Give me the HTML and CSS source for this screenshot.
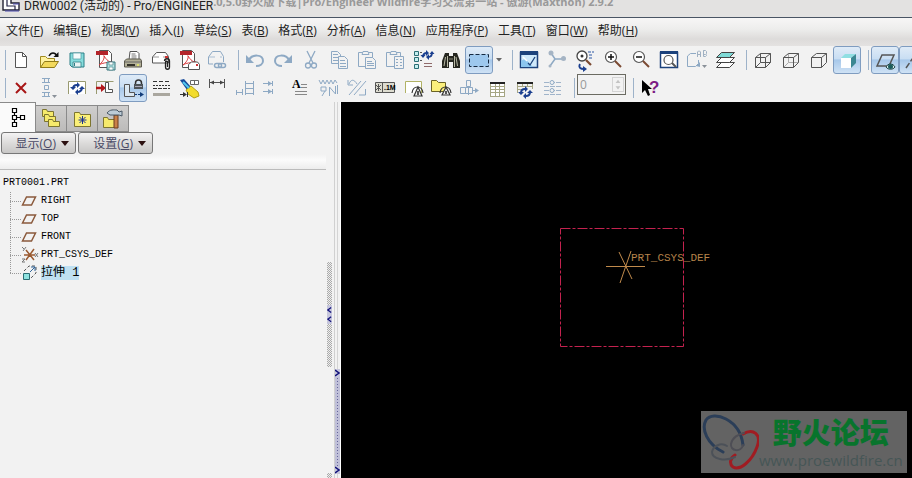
FILE: index.html
```html
<!DOCTYPE html>
<html lang="zh">
<head>
	<meta charset="UTF-8">
	<title>DRW0002 (活动的) - Pro/ENGINEER</title>
	<link rel="stylesheet" href="styles.css">
</head>
<body>

<header class="titlebar">
	<svg class="app-icon" width="18" height="12" viewBox="0 0 18 12"><path d="M1 0V10H17V3H9V0" fill="#fff" stroke="#223" stroke-width="1.4"/><path d="M5 0V6H13V10" fill="none" stroke="#224" stroke-width="1.2"/><path d="M11 4h6M3 11h14" stroke="#4a4ab0"/></svg>
	<h1>DRW0002 (活动的) - Pro/ENGINEER</h1>
	<span class="ghost">.0,5.0野火版下载|Pro/Engineer Wildfire学习交流第一站 - 傲游(Maxthon) 2.9.2</span>
</header>

<nav class="menubar">
	<a href="#">文件(<u>F</u>)</a>
	<a href="#">编辑(<u>E</u>)</a>
	<a href="#">视图(<u>V</u>)</a>
	<a href="#">插入(<u>I</u>)</a>
	<a href="#">草绘(<u>S</u>)</a>
	<a href="#">表(<u>B</u>)</a>
	<a href="#">格式(<u>R</u>)</a>
	<a href="#">分析(<u>A</u>)</a>
	<a href="#">信息(<u>N</u>)</a>
	<a href="#">应用程序(<u>P</u>)</a>
	<a href="#">工具(<u>T</u>)</a>
	<a href="#">窗口(<u>W</u>)</a>
	<a href="#">帮助(<u>H</u>)</a>
</nav>

<div class="toolbars">
	<!-- file, edit, view, display -->
	<div class="toolbar">
		<button aria-label="新建"><svg viewBox="0 0 24 24"><path d="M6.500 4.500h7l4 4v11h-11z" fill="#fff" stroke="#555"/><path d="M13.500 4.500v4h4" fill="none" stroke="#555"/></svg></button>
		<button aria-label="打开"><svg viewBox="0 0 24 24"><path d="M3.500 19.500v-11h5l2 2h7v3" fill="#fff2a0" stroke="#a08a20"/><path d="M3.500 19.500l4-6h14l-4 6z" fill="#f3d95c" stroke="#8f7a18"/><path d="M12 8c2-4 6-4 8 0" fill="none" stroke="#111" stroke-width="1.500"/><path d="M21.500 4v5h-5z" fill="#111"/></svg></button>
		<button aria-label="保存"><svg viewBox="0 0 24 24"><path d="M5 5h14v14H7l-2-2z" fill="#86dcdc" stroke="#2c7f86"/><path d="M8 5h8v6H8z" fill="#f4fbfb" stroke="#4d9aa0" stroke-width=".7"/><path d="M8 14h8v5H8z" fill="#e8f4f4" stroke="#2c7f86" stroke-width=".8"/><path d="M9.500 15v3" stroke="#2c7f86"/></svg></button>
		<button aria-label="导出 PDF"><svg viewBox="0 0 24 24"><path d="M6.500 2.500h9l3 3v14h-12z" fill="#fff" stroke="#555"/><path d="M3 3h12v4H3z" fill="#b3242a"/><path d="M6 17c3-2 6-7 5-9s3 6 7 6-8 0-12 3" fill="none" stroke="#d9383c"/><path d="M14 14h8v8h-8z" fill="#b5e4e4" stroke="#39757c"/><path d="M16 14h4v3h-4zM16 19h4v3h-4z" fill="#fff" stroke="#39757c" stroke-width=".6"/></svg></button>
		<button aria-label="打印"><svg viewBox="0 0 24 24"><path d="M8 12l1-8.500h7l2 2V12" fill="#fff" stroke="#555"/><path d="M10.500 6h4M10.500 8h5M10.500 10h5" stroke="#777"/><path d="M3.500 13l2-2h14l1 2v6h-17z" fill="#b3b098" stroke="#5a584c"/><path d="M4 14h16" stroke="#666"/><path d="M6 17h8" stroke="#33322a" stroke-width="2"/><path d="M16 17h2" stroke="#dde070" stroke-width="2"/></svg></button>
		<button aria-label="发送附件"><svg viewBox="0 0 24 24"><path d="M3.500 15V9l4-4.500h9l3 4V15z" fill="#fff" stroke="#555"/><path d="M4 9h6M14 9h2" stroke="#999"/><path d="M16 8h3v2h-3z" fill="#c33"/><path d="M15.500 13c0-3 5-3 5 0v6c0 3-4 3-4 0v-5c0-1 2-1 2 0v5" fill="none" stroke="#222" stroke-width="1.300"/></svg></button>
		<button aria-label="发送 PDF"><svg viewBox="0 0 24 24"><path d="M5.500 2.500h9l3 3v14h-12z" fill="#fff" stroke="#555"/><path d="M3 3h12v4H3z" fill="#b3242a"/><path d="M6 17c3-2 6-7 5-9s3 6 7 6-8 0-12 3" fill="none" stroke="#d9383c"/><path d="M11.500 21.500v-5l3-2.500h6l2 2.500v5z" fill="#fff" stroke="#555"/><path d="M19 16h2v2h-2z" fill="#c33"/></svg></button>
		<button disabled aria-label="发送链接"><svg viewBox="0 0 24 24"><path d="M3.500 16V9l4-5.500h8l3 5V14M3.500 16H8" fill="none" stroke="#8ea9c4"/><path d="M4 9h6M15 9h2" stroke="#a9bdd2"/><rect x="9.500" y="15.500" width="7" height="4" rx="2" fill="none" stroke="#8ea9c4" stroke-width="1.500"/><rect x="13.500" y="15.500" width="7" height="4" rx="2" fill="none" stroke="#8ea9c4" stroke-width="1.500"/></svg></button>
		<span class="sep"></span>
		<button disabled aria-label="撤消"><svg viewBox="0 0 24 24"><path d="M6 12c3-6 14-6 14 1 0 3-3 5-7 5" fill="none" stroke="#8ea9c4" stroke-width="2"/><path d="M3 7v8h8z" fill="#8ea9c4"/></svg></button>
		<button disabled aria-label="重做"><svg viewBox="0 0 24 24"><path d="M18 12c-3-6-14-6-14 1 0 3 3 5 7 5" fill="none" stroke="#8ea9c4" stroke-width="2"/><path d="M21 7v8h-8z" fill="#8ea9c4"/></svg></button>
		<button disabled aria-label="剪切"><svg viewBox="0 0 24 24"><path d="M8 3l6 12M16 3l-6 12" fill="none" stroke="#8ea9c4" stroke-width="1.300"/><circle cx="9" cy="17.500" r="2.500" fill="none" stroke="#8ea9c4" stroke-width="1.300"/><circle cx="15" cy="17.500" r="2.500" fill="none" stroke="#8ea9c4" stroke-width="1.300"/></svg></button>
		<button disabled aria-label="复制"><svg viewBox="0 0 24 24"><g fill="#f2f2f2" stroke="#8ea9c4"><path d="M4.500 3.500h6l3 3v9h-9z"/><path d="M6 6.500h5M6 9.500h5M6 12.500h5"/><path d="M11.500 8.500h6l3 3v9h-9z"/><path d="M13 12.500h5M13 15.500h6M13 18.500h6"/></g></svg></button>
		<button disabled aria-label="粘贴"><svg viewBox="0 0 24 24"><g fill="#f2f2f2" stroke="#8ea9c4"><path d="M3.500 4.500h14v14h-14z"/><path d="M7 6.500l1-3h5l1 3z"/><path d="M10.500 9.500h7l3 3v8h-10z"/><path d="M12 13.500h5M12 15.500h7M12 17.500h7"/></g></svg></button>
		<button disabled aria-label="选择性粘贴"><svg viewBox="0 0 24 24"><g fill="#f2f2f2" stroke="#8ea9c4"><path d="M3.500 4.500h14v14h-14z"/><path d="M7 6.500l1-3h5l1 3z"/><path d="M11.500 8.500h9v12h-9z"/><path d="M13 11.500h2M17 11.500h2M13 14.500h2M17 14.500h2M13 17.500h2M17 17.500h2"/></g></svg></button>
		<button aria-label="重新生成"><svg viewBox="0 0 24 24"><g fill="#c6eeee" stroke="#2b6d74"><path d="M3.500 3.500h4v4h-4zM3.500 9.500h4v4h-4zM3.500 16.500h4v4h-4z"/></g><path d="M12 9c0-3 2-4 4-4M21 5c0 3-2 4-4 4" fill="none" stroke="#1b3f8f" stroke-width="1.800"/><path d="M15 2v6l3-3zM18 6v6l-3-3zM9.500 7h5L12 10zM18.500 6h5L21 3z" fill="#1b3f8f"/><path d="M9 4.500h2M9 12.500h2" stroke="#555"/><path d="M13 15.500h8M13 18.500h8" stroke="#8f6a6a"/></svg></button>
		<button aria-label="查找"><svg viewBox="0 0 24 24"><path d="M6 5h4v3h4V5h4l3 8v7h-7v-6h-4v6H3v-7z" fill="#25261f"/><path d="M6.500 9L5 18M17 9l1.500 9M8.500 8v11M15.500 8v11" stroke="#b9baa5"/><path d="M10 11h4" stroke="#8c8c7c"/></svg></button>
		<button class="on" aria-label="选择框"><svg viewBox="0 0 24 24"><path d="M2.500 6.500h19v12h-19z" fill="#9dc8ee" stroke="#14283f" stroke-dasharray="4 2"/></svg></button>
		<button class="drop" aria-label="选择选项"><svg viewBox="0 0 12 24"><path d="M3 10h6l-3 3.500z" fill="#666"/></svg></button>
		<span class="sep"></span>
		<button aria-label="重画"><svg viewBox="0 0 24 24"><path d="M3.500 4.500h17v15h-17z" fill="#cfe9fb" stroke="#1c427c" stroke-width="1.500"/><path d="M3 3h18v4H3z" fill="#1c427c"/><path d="M4 19v-6c4-3 5-2 8 2l4 4z" fill="#8cc6ef"/><path d="M11 15l2 2 5-8" fill="none" stroke="#1c427c" stroke-width="1.300"/><path d="M6 9l4 4" stroke="#fff" stroke-width="1.500"/></svg></button>
		<button disabled aria-label="旋转中心"><svg viewBox="0 0 24 24"><path d="M6 5l4 6h9M10 11l-5 7" fill="none" stroke="#8ea9c4" stroke-width="1.500"/><g fill="#a5b4c4"><circle cx="6" cy="5" r="2.500"/><circle cx="18.500" cy="10.500" r="2.500"/><circle cx="5" cy="18" r="1.500"/></g></svg></button>
		<button aria-label="定向模式"><svg viewBox="0 0 24 24"><circle cx="9" cy="8" r="5" fill="#fff" stroke="#444" stroke-width="1.300"/><circle cx="9" cy="8" r="1.500" fill="#333"/><path d="M13 12l5 5" stroke="#7b4a32" stroke-width="2.200"/><path d="M15 4h6M16 7h4M16 10h3" stroke="#2b56a5" stroke-dasharray="3 1"/><path d="M7 16c-2 4 1 5 4 5" fill="none" stroke="#1b3f8f" stroke-width="1.800"/><path d="M10 18v6l4-3z" fill="#1b3f8f"/></svg></button>
		<button aria-label="放大"><svg viewBox="0 0 24 24"><circle cx="10" cy="9" r="5.500" fill="#fff" stroke="#555" stroke-width="1.200"/><path d="M7 9h6M10 6v6" stroke="#111" stroke-width="1.500"/><path d="M14 13l6 6" stroke="#7b4a32" stroke-width="2"/></svg></button>
		<button aria-label="缩小"><svg viewBox="0 0 24 24"><circle cx="10" cy="9" r="5.500" fill="#fff" stroke="#555" stroke-width="1.200"/><path d="M7 9h6" stroke="#111" stroke-width="1.500"/><path d="M14 13l6 6" stroke="#7b4a32" stroke-width="2"/></svg></button>
		<button aria-label="重新调整"><svg viewBox="0 0 24 24"><path d="M3.500 4.500h17v15h-17z" fill="#fff" stroke="#1c427c" stroke-width="1.500"/><path d="M3 3h18v3H3z" fill="#1c427c"/><circle cx="11.500" cy="12" r="4.500" fill="#fff" stroke="#555" stroke-width="1.200"/><path d="M15 15l4 4" stroke="#555" stroke-width="2"/></svg></button>
		<button disabled aria-label="视图列表"><svg viewBox="0 0 24 24"><path d="M2.500 18.500V8l3-2.500H11M2.500 18.500h8l3-3V12" fill="none" stroke="#8ea9c4"/><path d="M11 18l4-4v5z" fill="#8ea9c4"/><path d="M12.500 9V4l1-1h1l1 1v5M12.500 6.500h3M18.500 2.500h2l1 1v2l-1 1h-2zM18.500 2.500v6h2l1-1v-1" fill="none" stroke="#9fb0c2"/><path d="M17 17h5l-2.500 3z" fill="#8a9199"/></svg></button>
		<button aria-label="层"><svg viewBox="0 0 24 24"><g fill="#fff" stroke="#444"><path d="M3.500 19.500l5-5h13l-5 5z"/><path d="M3.500 14.500l5-5h13l-5 5z"/><path d="M3.500 9.500l5-5h13l-5 5z" fill="#7fdad6"/></g></svg></button>
		<span class="sep"></span>
		<button aria-label="线框"><svg viewBox="0 0 24 24"><path d="M4.500 9.500h10v10h-10zM9.500 5.500h10v9h-10zM4.500 9.500l5-4M14.500 9.500l5-4M14.500 19.500l5-5M4.500 19.500l5-5" fill="none" stroke="#555"/></svg></button>
		<button aria-label="隐藏线"><svg viewBox="0 0 24 24"><path d="M9.500 5.500v9h10M4.500 19.500l5-5" fill="none" stroke="#aaa"/><path d="M4.500 9.500h10v10h-10zM4.500 9.500l5-4h10v9l-5 5M14.500 9.500l5-4" fill="none" stroke="#555"/></svg></button>
		<button aria-label="无隐藏线"><svg viewBox="0 0 24 24"><path d="M4.500 9.500h10v10h-10zM4.500 9.500l5-4h10v9l-5 5M14.500 9.500l5-4" fill="none" stroke="#555"/></svg></button>
		<button class="on" aria-label="着色"><svg viewBox="0 0 24 24"><path d="M6 10h10v10H6z" fill="#fff"/><path d="M6 10l4-4h11l-5 4z" fill="#90dfe2"/><path d="M16 10l5-4v9l-5 5z" fill="#3b8792"/></svg></button>
		<span class="sep"></span>
		<button class="on" aria-label="基准平面显示"><svg viewBox="0 0 24 24"><path d="M4 18l5-11h12l-5 11z" fill="none" stroke="#555" stroke-width="1.500"/><path d="M13 19c2-4 7-4 9 0-2 3-7 3-9 0z" fill="#dff2f2" stroke="#244"/><circle cx="17.500" cy="18.500" r="2.500" fill="#1c5c5c"/></svg></button>
		<button class="on" aria-label="基准轴显示"><svg viewBox="0 0 24 24"><path d="M5 20L16 4M14 12h8" fill="none" stroke="#555" stroke-width="1.500" stroke-dasharray="6 2"/></svg></button>
	</div>

	<!-- drawing tools -->
	<div class="toolbar">
		<button aria-label="删除"><svg viewBox="0 0 24 24"><path d="M7 7l10 10M17 7L7 17" stroke="#a81616" stroke-width="2"/></svg></button>
		<button disabled aria-label="对齐"><svg viewBox="0 0 24 24"><path d="M7.500 2.500h4v4h-4zM7.500 9.500h4v4h-4zM7.500 16.500h4v4h-4zM5 2.500h8M5 6.500h8M5 16.500h8M5 20.500h8" fill="none" stroke="#8ea9c4"/><path d="M15 19h5l-2.500 3z" fill="#8a9199"/></svg></button>
		<button aria-label="更新页面"><svg viewBox="0 0 24 24"><path d="M3.500 18V5.500h17V18" fill="#fff" stroke="#999a70"/><path d="M8 13c0-3 2-4 4-4M17 11c0 3-2 5-5 5" fill="none" stroke="#1b3f8f" stroke-width="2"/><path d="M12 6v6l3-3zM13 13v6l-3-3zM5 11h6l-3 3zM14 13h6l-3-3z" fill="#1b3f8f"/></svg></button>
		<button aria-label="插入视图"><svg viewBox="0 0 24 24"><path d="M3.500 18V5.500h17" fill="none" stroke="#999a70"/><path d="M3 12h6" stroke="#b3181c" stroke-width="2.500"/><path d="M8 8l5 4-5 4z" fill="#b3181c"/><path d="M12.500 6.500h3v7h4v3h-7z" fill="#fff" stroke="#555"/></svg></button>
		<button class="on" aria-label="锁定视图移动"><svg viewBox="0 0 24 24"><path d="M3.500 8.500h5v8h5v4h-10z" fill="#dbe8f2" stroke="#555"/><path d="M14.500 9V7c0-4 6-4 6 0v2" fill="none" stroke="#333" stroke-width="1.500"/><path d="M13 8h9v5h-9z" fill="#4c5359"/><path d="M14 10.500h7" stroke="#aab"/><path d="M14 18.500h6" stroke="#123c7a" stroke-dasharray="2 1"/><path d="M19 16l4 2.500-4 2.500z" fill="#123c7a"/></svg></button>
		<button aria-label="线造型"><svg viewBox="0 0 24 24"><path d="M4 5.500h17" stroke="#333" stroke-dasharray="4 2"/><path d="M4 9.500h17" stroke="#333" stroke-dasharray="2 1"/><path d="M4 12.500h17" stroke="#333" stroke-dasharray="4 1"/><path d="M4 17h17v3H4z" fill="#aaa79f"/></svg></button>
		<button aria-label="显示及拭除"><svg viewBox="0 0 24 24"><path d="M3 4l4-1 7 8-4 3z" fill="#174a9b"/><path d="M9 14l5-4 7 6 1 4-5 2-6-4z" fill="#f3dc2c" stroke="#b3a014"/><path d="M6 6l6 6" stroke="#52c9ef" stroke-width="2"/><path d="M13.500 4.500h8v4h-8zM17.500 4v5" fill="#fff" stroke="#666"/><path d="M3 18.500h5M10.500 16v5" stroke="#333"/><path d="M6 16l4 2.500L6 21z" fill="#333"/></svg></button>
		<button aria-label="尺寸"><svg viewBox="0 0 24 24"><path d="M4.500 3v9M19.500 3v9M5 6.500h14" stroke="#555"/><path d="M5 6.500l4-2v4zM19 6.500l-4-2v4z" fill="#444"/></svg></button>
		<button disabled aria-label="整理尺寸"><svg viewBox="0 0 24 24"><path d="M3.500 14v5M3.500 16.500h6M9.500 13v6M12.500 5v14M20.500 5v14M12.500 7.500h8M12.500 12.500h8M12.500 17.500h8" fill="none" stroke="#8ea9c4"/></svg></button>
		<button disabled aria-label="对齐尺寸"><svg viewBox="0 0 24 24"><path d="M2 7.500h9M2 15.500h9M11.500 5v5M11.500 13v5" stroke="#8ea9c4"/><path d="M7 5l4 2.500L7 10zM7 13l4 2.500L7 18z" fill="#8ea9c4"/></svg></button>
		<button aria-label="注释"><svg viewBox="0 0 24 24"><text x="3" y="12" class="glyph">A</text><path d="M12 8.500h6M12 11.500h6M6 15.500h12M6 18.500h12" stroke="#888"/></svg></button>
		<button disabled aria-label="表面粗糙度"><svg viewBox="0 0 24 24"><path d="M2 4l2 4 2-4 2 4 2-4 2 4 2-4 2 4 2-4 2 3M4 11h5v4H4zM8 15l-3 5M12.500 20v-9l6 7v-8M20.500 9v9" fill="none" stroke="#8ea9c4"/></svg></button>
		<button disabled aria-label="角拐与断点"><svg viewBox="0 0 24 24"><path d="M3 4v5h5M4 8c2-5 5-5 8 0M4 19L16 5M9 19L21 5M20.500 13v6H14" fill="none" stroke="#8ea9c4"/></svg></button>
		<button aria-label="几何公差"><svg viewBox="0 0 24 24"><path d="M2.500 6.500h19v10h-19z" fill="#dddcd0" stroke="#555"/><path d="M9.500 6v11M3 9l5 5M8 9l-5 5M5.500 8v7" stroke="#555"/><text x="11" y="14" class="tol">.1M</text></svg></button>
		<button aria-label="符号"><svg viewBox="0 0 24 24"><path d="M4.500 17V5.500h16V17" fill="#fff" stroke="#b1b265"/><path d="M13 20l4-9 4 9z" fill="#eee" stroke="#333" stroke-width="1.200"/><path d="M11 17c1-8 10-8 11 0" fill="none" stroke="#333" stroke-width="1.200"/><path d="M17 15v4" stroke="#222" stroke-width="1.500"/></svg></button>
		<button aria-label="符号库"><svg viewBox="0 0 24 24"><path d="M2.500 15.500v-11h5l2 2h7v9z" fill="#fbef7c" stroke="#6b6325"/><path d="M13 19l4-8 4 8z" fill="#eee" stroke="#333" stroke-width="1.200"/><path d="M11 17c1-8 10-8 11 0" fill="none" stroke="#333" stroke-width="1.200"/><path d="M17 15v3" stroke="#222" stroke-width="1.500"/></svg></button>
		<button disabled aria-label="移动项目"><svg viewBox="0 0 24 24"><path d="M9.500 4.500h4v6h-4zM3.500 11.500h5v6h-5zM8.500 11.500h7v6h-7zM15 14.500h5M11.500 11v8" fill="none" stroke="#8ea9c4"/><path d="M18 12l4 2.500-4 2.500z" fill="#8ea9c4"/></svg></button>
		<button aria-label="表"><svg viewBox="0 0 24 24"><path d="M5.500 6.500h14v14h-14z" fill="#fff"/><path d="M5 10.500h15M5 13.500h15M5 16.500h15M5 20.500h15M10.500 6v15M14.500 6v15M5.500 6v15M19.500 6v15" stroke="#a6a684"/><path d="M5 7h15" stroke="#222" stroke-width="2"/></svg></button>
		<button aria-label="更新表"><svg viewBox="0 0 24 24"><path d="M4 10.500h16M4 13.500h5M9.500 6v5M4.500 6v11M19.500 6v7M14.500 6v5" stroke="#a6a684"/><path d="M4 7h16" stroke="#222" stroke-width="2"/><path d="M8 17c0-3 2-4 4-4M17 16c0 3-2 4-4 4" fill="none" stroke="#1b3f8f" stroke-width="2"/><path d="M12 10v6l3-3zM13 17v6l-3-3zM5 16h6l-3 3zM14 17h6l-3-3z" fill="#1b3f8f"/></svg></button>
		<button disabled aria-label="球标"><svg viewBox="0 0 24 24"><path d="M3 6.500h18M3 10.500h18M3 14.500h18M3 18.500h18" stroke="#a0b4ca" stroke-dasharray="5 1"/><circle cx="11" cy="6.500" r="2" fill="#f2f2f2" stroke="#8ea9c4"/><circle cx="11" cy="14.500" r="2" fill="#f2f2f2" stroke="#8ea9c4"/></svg></button>
		<span class="sep"></span>
		<input class="spin" type="text" value="0" disabled aria-label="页面">
		<span class="spin-arrows"><svg viewBox="0 0 12 16"><path d="M6 2l3 4H3zM6 14l3-4H3z" fill="#c4c4c4"/></svg></span>
		<span class="sep"></span>
		<button aria-label="上下文帮助"><svg viewBox="0 0 24 24"><path d="M4 4v13l3-3 3 6 2-1-2-6h4z" fill="#000"/><text x="11" y="17" class="help">?</text></svg></button>
	</div>
</div>

<main class="workspace">
	<aside class="navigator">
		<div class="tabs">
			<button class="tab active" aria-label="模型树"><svg viewBox="0 0 24 24"><path d="M6.500 2.500h4v4h-4zM6.500 9.500h4v4h-4zM6.500 16.500h4v4h-4zM14.500 9.500h4v4h-4zM8.500 7v2M8.500 14v2M11 11.500h3" fill="#fff" stroke="#000" stroke-width="1.200"/></svg></button>
			<button class="tab" aria-label="文件夹"><svg viewBox="0 0 24 24"><g fill="#f6ea6c" stroke="#7d7530"><path d="M3.500 9.500v-7h4l1 2h6v5z"/><path d="M5.500 14.500v-7h4l1 2h6v5z"/><path d="M9.500 19.500v-7h4l1 2h6v5z"/></g></svg></button>
			<button class="tab" aria-label="收藏夹"><svg viewBox="0 0 24 24"><path d="M4.500 19.500v-14h5l1 2h10v12z" fill="#fbf078" stroke="#7d7530"/><path d="M12.500 9v8M8.500 13h8M9.500 10l6 6M15.500 10l-6 6" stroke="#1a3191"/></svg></button>
			<button class="tab" aria-label="连接"><svg viewBox="0 0 24 24"><path d="M2.500 20.500v-10h4l1 2h7v8z" fill="#f6ea6c" stroke="#7d7530"/><path d="M13 8h4v13h-4z" fill="#c98048" stroke="#6c3d1c"/><path d="M6 6c3-4 7-3 10-3l2 2 3-1v5l-3-1H9z" fill="#bccbd6" stroke="#4b5966"/></svg></button>
		</div>
		<div class="actions">
			<button class="action"><span>显示(<u>O</u>)</span><span class="caret"></span></button>
			<button class="action"><span>设置(<u>G</u>)</span><span class="caret"></span></button>
		</div>
		<div class="tree-head"></div>
		<div class="tree">
			<div class="root">PRT0001.PRT</div>
			<ul>
				<li><svg viewBox="0 0 18 18"><path d="M1.500 13l4-8h9l-4 8z" fill="none" stroke="#8b5a3c" stroke-width="1.500"/></svg><span>RIGHT</span></li>
				<li><svg viewBox="0 0 18 18"><path d="M1.500 13l4-8h9l-4 8z" fill="none" stroke="#8b5a3c" stroke-width="1.500"/></svg><span>TOP</span></li>
				<li><svg viewBox="0 0 18 18"><path d="M1.500 13l4-8h9l-4 8z" fill="none" stroke="#8b5a3c" stroke-width="1.500"/></svg><span>FRONT</span></li>
				<li><svg viewBox="0 0 18 18"><path d="M3 9h11M5 4l8 10M13 3L5 14" stroke="#9a5a30" stroke-width="1.500"/><path d="M1 1l2 2M5 1L2 5M1 13h3l-3 3h3M14 7l3 4M17 7l-3 4" fill="none" stroke="#777"/></svg><span>PRT_CSYS_DEF</span></li>
				<li><svg viewBox="0 0 18 18"><path d="M2.500 9.500h6v6h-6z" fill="#8fe3e0" stroke="#2b6d74"/><path d="M3 7l5-5h7v7l-5 5" fill="none" stroke="#555" stroke-dasharray="3 2"/><path d="M9 8l5-5M10 3h4v4" fill="none" stroke="#33679b"/></svg><span class="picked">拉伸 1</span></li>
			</ul>
		</div>
	</aside>

	<div class="sash left">
		<span class="grip">
			<svg viewBox="0 0 6 22"><path d="M5 3L1 6l4 3M5 14L1 17l4 3" fill="none" stroke="#12127a" stroke-width="1.500"/></svg>
		</span>
		<span class="grip"></span>
	</div>
	<div class="sash right">
		<span class="grip">
			<svg viewBox="0 0 5 8"><path d="M0 1l4 3-4 3" fill="none" stroke="#12127a" stroke-width="1.500"/></svg>
			<svg viewBox="0 0 5 8"><path d="M0 1l4 3-4 3" fill="none" stroke="#12127a" stroke-width="1.500"/></svg>
		</span>
	</div>

	<section class="canvas">
		<svg class="view" width="126" height="121" viewBox="0 0 126 121">
			<path d="M1.500 1.500h123v118h-123z" fill="none" stroke="#c4224f" stroke-dasharray="10 2 3 2"/>
			<path d="M47 39.500h39M60 25l13 27M72 24L61 56" fill="none" stroke="#c08a4c"/>
		</svg>
		<span class="csys">PRT_CSYS_DEF</span>
		<div class="watermark">
			<svg width="58" height="62" viewBox="0 0 58 62">
				<g fill="none" stroke-linecap="round">
					<path d="M22 41C6 33 0 18 5 9 12-1 39 8 42 34" stroke="#2b3e58" stroke-width="3"/>
					<path d="M42 23C52 17 61 23 56 36 51 50 39 60 32 56 28 53 29 47 34 44" stroke="#a01c22" stroke-width="3"/>
					<path d="M42 34C40 42 29 40 30 33 31 27 37 23 43 22" stroke="#4e4e55" stroke-width="2"/>
					<path d="M34 46C24 51 11 48 11 41 12 35 20 31 26 35" stroke="#4c5158" stroke-width="2"/>
				</g>
			</svg>
			<div class="brand">
				<strong>野火论坛</strong>
				<span>www.proewildfire.cn</span>
			</div>
		</div>
	</section>
</main>

</body>
</html>
```
FILE: styles.css
```css
* {
	box-sizing: border-box;
}

body {
	margin: 0;
	height: 100vh;
	display: flex;
	flex-direction: column;
	overflow: hidden;
	background: #f2f2f2;
	color: #222;
	font: 12px "Open Sans", "Noto Sans CJK SC", sans-serif;
}

button {
	margin: 0;
	padding: 0;
	border: 0;
	background: none;
	font: inherit;
	color: inherit;
}

/* title and menu */
.titlebar {
	flex: none;
	display: flex;
	height: 18px;
	overflow: hidden;
	background: #e3e2e1;
	border-bottom: 1px solid #4a5564;
	white-space: nowrap;
}

.app-icon {
	flex: none;
	margin: 0 4px 0 2px;
}

.titlebar h1 {
	margin: 0;
	font: 12px "Roboto", "Noto Sans CJK SC", sans-serif;
	line-height: 13px;
	color: #222;
}

.ghost {
	font-size: 11px;
	font-weight: bold;
	line-height: 3px;
	color: #999;
}

.menubar {
	flex: none;
	display: flex;
	gap: 10px;
	height: 28px;
	padding-left: 6px;
	line-height: 25px;
	white-space: nowrap;
	background: linear-gradient(#f7f6f6 0, #ededec 40%, #dddbda 75%, #e4e2e1);
}

.menubar a {
	color: #222;
	text-decoration: none;
}

/* toolbars */
.toolbars {
	flex: none;
	overflow: hidden;
}

.toolbar {
	display: flex;
	align-items: center;
	height: 28px;
	padding-left: 7px;
	background: linear-gradient(#9db2c9, #9db2c9) 5px 4px / 1px 20px no-repeat;
}

.toolbar button {
	flex: none;
	display: flex;
	align-items: center;
	justify-content: center;
	width: 28px;
	height: 28px;
}

.toolbar button svg {
	flex: none;
	width: 24px;
	height: 24px;
}

.toolbar .drop,
.toolbar .drop svg {
	width: 12px;
}

.toolbar .on {
	border: 1px solid #7f9cc0;
	border-radius: 3px;
	background: linear-gradient(#dfebf7 0, #c9def3 45%, #a7c8ea 50%, #cfe2f5);
}

.sep {
	flex: none;
	width: 10px;
	height: 20px;
	background: linear-gradient(#9db2c9, #9db2c9) 7px 0 / 1px 20px no-repeat;
}

.glyph {
	font: bold 12px "Liberation Serif", serif;
}

.tol {
	font: bold 7px "Liberation Sans", sans-serif;
}

.help {
	font: bold 17px "Liberation Sans", sans-serif;
	fill: #7c1c84;
}

.spin {
	flex: none;
	align-self: flex-start;
	width: 33px;
	height: 21px;
	padding: 0 2px;
	border: 1px solid #6b6b62;
	border-right: 0;
	background: #f2f2f2;
	color: #999;
	font: 12px "Open Sans", sans-serif;
}

.spin-arrows {
	flex: none;
	align-self: flex-start;
	display: flex;
	justify-content: center;
	width: 16px;
	height: 21px;
	padding: 2px 0;
	border: 1px solid #6b6b62;
	border-left: 0;
}

.spin-arrows svg {
	width: 12px;
	height: 15px;
	border: 1px solid #d4d4d4;
}

/* navigator */
.workspace {
	flex: 1;
	display: flex;
	min-height: 0;
}

.navigator {
	flex: none;
	width: 326px;
}

.tabs {
	display: flex;
	align-items: flex-end;
	height: 30px;
}

.tab {
	display: flex;
	align-items: center;
	justify-content: center;
	width: 31px;
	height: 27px;
	border: 1px solid #8a8a8a;
	border-left: 0;
	background: linear-gradient(#cfcecd, #bcbbba);
}

.tab.active {
	width: 36px;
	height: 30px;
	border-bottom: 0;
	background: #fafafa;
}

.tab svg {
	width: 24px;
	height: 24px;
}

.actions {
	display: flex;
	gap: 2px;
	padding-left: 1px;
}

.action {
	display: flex;
	align-items: center;
	justify-content: flex-end;
	gap: 5px;
	width: 75px;
	height: 22px;
	padding-right: 6px;
	border: 1px solid #777;
	border-radius: 3px;
	background: linear-gradient(#f4f3f3, #dcdbda 50%, #c8c7c6);
	color: #4a4a66;
}

.caret {
	border: 4px solid transparent;
	border-top: 5px solid #2b1010;
	border-bottom: 0;
}

.tree-head {
	height: 16px;
	border-bottom: 1px solid #bbb;
	background: linear-gradient(#f2f2f2, #fbfbfb 40%, #ededed);
}

.tree {
	padding: 4px 0 0 3px;
	font: 10px "Liberation Mono", "Noto Sans CJK SC", monospace;
	line-height: 18px;
	color: #000;
}

.tree ul {
	margin: 0 0 0 7px;
	padding: 0;
	list-style: none;
	background: repeating-linear-gradient(#999 0 1px, transparent 1px 2px) 0 0 / 1px 82px no-repeat;
}

.tree li {
	display: flex;
	align-items: center;
	height: 18px;
}

.tree li::before {
	content: "";
	width: 11px;
	border-top: 1px dotted #999;
}

.tree li svg {
	width: 18px;
	height: 18px;
	margin-right: 2px;
}

.picked {
	height: 14px;
	font-size: 12px;
	line-height: 14px;
	background: #bfe0f2;
}

/* splitters */
.sash {
	flex: none;
	display: flex;
	flex-direction: column;
	overflow: hidden;
	border-right: 1px solid #d0d0d0;
}

.sash.left {
	width: 9px;
	gap: 106px;
	padding: 160px 2px 0 1px;
}

.sash.right {
	width: 6px;
	padding: 267px 0 0;
	border-right-color: #fff;
	background: linear-gradient(#d4d4d4, #d4d4d4) 2px 0 / 1px 100% no-repeat;
}

.grip {
	flex: none;
	display: flex;
	flex-direction: column;
	height: 105px;
	background: repeating-conic-gradient(#aaa 0 25%, #eee 0 50%) 0 0 / 2px 2px;
}

.grip svg {
	display: block;
	width: 100%;
	background: #c6c6dc;
}

.left .grip {
	justify-content: center;
}

.right .grip {
	justify-content: space-between;
	background: repeating-linear-gradient(#66669c 0 1px, transparent 1px 3px) 2px 0 / 1px 100% no-repeat #c0c0d8;
}

/* drawing area */
.canvas {
	flex: 1;
	position: relative;
	overflow: hidden;
	background: #000;
}

.view {
	position: absolute;
	left: 218px;
	top: 125px;
}

.csys {
	position: absolute;
	left: 290px;
	top: 149px;
	font: 11px "Liberation Mono", monospace;
	line-height: 14px;
	color: #b5824a;
}

.watermark {
	position: absolute;
	right: 5px;
	bottom: 5px;
	display: flex;
	align-items: center;
	width: 206px;
	height: 62px;
	background: #636363;
}

.brand {
	display: flex;
	flex-direction: column;
	align-items: center;
	white-space: nowrap;
}

.brand strong {
	font: 900 29px "Noto Sans CJK SC", sans-serif;
	line-height: 36px;
	color: #08742c;
}

.brand span {
	font-size: 15px;
	line-height: 22px;
	color: #465656;
}
```
